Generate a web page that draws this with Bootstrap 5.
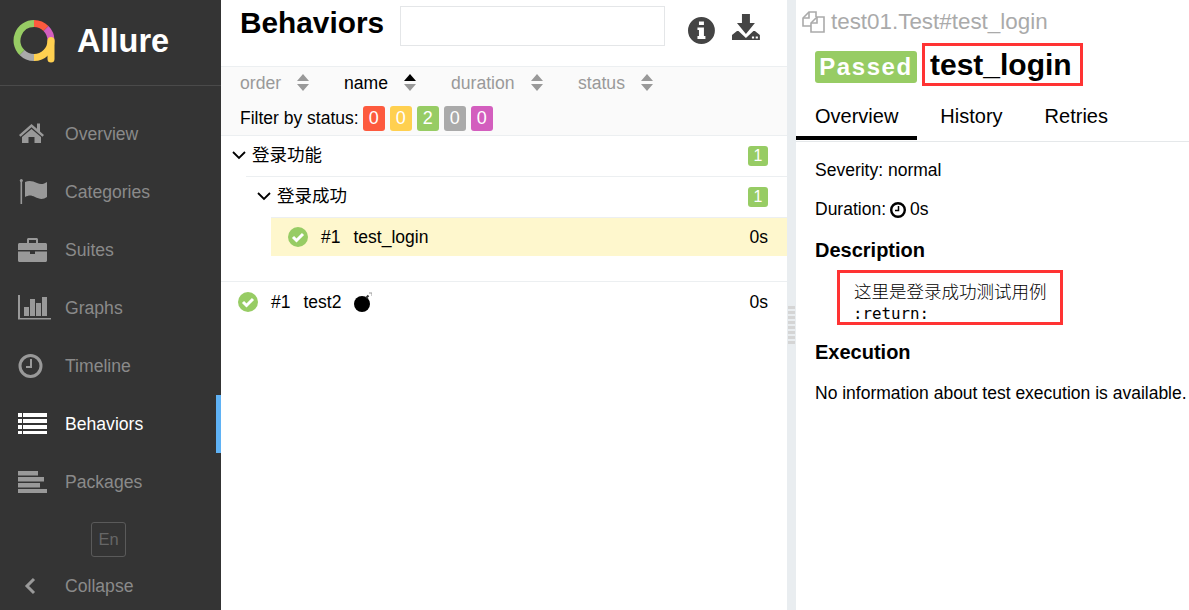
<!DOCTYPE html>
<html lang="en">
<head>
  <meta charset="UTF-8" />
  <title>Allure - Behaviors</title>
  <link href="https://cdn.jsdelivr.net/npm/bootstrap@5.3.3/dist/css/bootstrap.min.css" rel="stylesheet" />
  <style>
    html, body { height: 100%; overflow: hidden; }
    body { font-family: "Liberation Sans", "Noto Sans CJK SC", sans-serif; font-size: 17.5px; color: #000; }
    .app-shell { height: 610px; }

    .side-bar { width: 221px; flex: none; background: #343434; color: #8a8a8a; overflow: hidden; }
    .side-bar > * { flex: none; }
    .side-brand { height: 86px; border-bottom: 1px solid #4a4a4a; padding: 0 0 3px 13px; gap: 21px; color: #fff; font-size: 32.5px; font-weight: 700; }
    .side-menu { padding-top: 19px; }
    .side-item { height: 58px; padding-left: 17px; gap: 18px; font-size: 17.6px; color: #8a8a8a; }
    .side-item.is-active { color: #fff; border-right: 5px solid #5fb2f5; }
    .side-item svg { width: 30px; height: 30px; flex: none; overflow: visible; color: #999; }
    .side-item.is-active svg { color: #fff; }
    .lang-box { width: 35px; height: 35px; margin: 11px 0 0 91px; border: 1px solid #5a5a5a; border-radius: 3px; color: #666; font-size: 16.5px; }

    .tree-pane { width: 566px; flex: none; }
    .pane-head { height: 67px; padding: 6px 26px 0 19px; border-bottom: 1px solid #eceff1; }
    .pane-title { font-size: 29.8px; font-weight: 700; line-height: 34px; margin: 0 16px 0 0; width: 145px; white-space: nowrap; }
    .search-box { width: 266px; height: 40px; border: 1px solid #e4e6e8; border-radius: 0; }
    .tool-glyph { color: #444; }
    .info-glyph { margin: 11px 0 0 23px; }
    .save-glyph { margin: 8px 0 0 16px; }
    .sort-bar { height: 69px; background: #fafafa; border-bottom: 1px solid #eceff1; padding-left: 19px; }
    .sort-row { height: 32px; color: #999; font-size: 17.6px; }
    .sort-item { gap: 16px; }
    .sort-item.is-on { color: #000; }
    .sort-order { width: 104px; }
    .sort-name { width: 107px; }
    .sort-duration { width: 127px; }
    .filter-row { height: 32px; margin-top: 3px; gap: 5px; }
    .stat-chip { width: 22px; height: 25px; border-radius: 3px; color: #fff; font-size: 18px; }
    .chip-failed { background: #fd5a3e; margin-left: -1px; }
    .chip-broken { background: #ffd050; }
    .chip-passed { background: #97cc64; }
    .chip-skipped { background: #aaa; }
    .chip-unknown { background: #d35ebe; }

    .tree-row { padding-right: 19px; }
    .group-one { height: 40px; margin-left: 11px; }
    .group-two { height: 41px; margin-left: 25px; padding-left: 11px; border-top: 1px solid #eceff1; }
    .group-label { gap: 6px; padding-bottom: 2px; }
    .count-chip { width: 20px; height: 20px; border-radius: 3px; background: #97cc64; color: #fff; font-size: 16px; }
    .leaf-row { height: 39px; margin-left: 50px; padding-left: 17px; border-top: 1px solid #eceff1; background: #fef7cd; }
    .plain-row { height: 41px; margin-top: 25px; padding-left: 17px; border-top: 1px solid #eceff1; }
    .leaf-main { gap: 13px; }

    .split-bar { width: 9px; flex: none; background: #e9edf0; }
    .split-dots { width: 7px; height: 40px; margin-top: 306px; background-image: linear-gradient(#d5d5d5 60%, transparent 60%), linear-gradient(90deg, transparent 45%, #e9edf0 45%, #e9edf0 55%, transparent 55%); background-size: 100% 5px, 100% 100%; }

    .detail-pane { flex: 1; min-width: 0; white-space: nowrap; overflow: hidden; }
    .detail-path { height: 43px; padding-left: 6px; gap: 6px; color: #aaa; font-size: 22.4px; }
    .detail-title { height: 46px; padding-left: 19px; gap: 5px; }
    .pass-tag { width: 102px; height: 32px; margin-top: 8px; background: #97cc64; color: #fff; border-radius: 3px; font-size: 24px; font-weight: 700; letter-spacing: 1.6px; }
    .title-frame { border: 3px solid #f33; padding: 0 8px 0 5px; height: 43px; font-size: 30px; font-weight: 700; line-height: 38px; }
    .tab-strip { height: 53px; border-bottom: 1px solid #e5e8ea; }
    .tab-item { height: 51px; padding: 7px 19px 0; font-size: 20px; color: #000; }
    .tab-item.is-open { border-bottom: 4px solid #000; }
    .tab-item + .tab-item { padding: 7px 23px 4px; }
    .tab-item + .tab-item + .tab-item { padding-left: 19px; }
    .detail-body { padding: 18px 0 0 19px; line-height: 21px; }
    .detail-line { margin-bottom: 18px; }
    .detail-heading { font-size: 20px; font-weight: 700; line-height: 24px; margin: 0 0 8px; }
    .desc-frame { width: 226px; height: 55px; margin: 0 0 15px 22px; border: 3px solid #f33; padding: 7px 0 0 14px; line-height: 21px; }
    .desc-cjk { font-size: 17.5px; font-family: "Noto Sans CJK SC", sans-serif; font-weight: 300; }
    .desc-code { font-family: "DejaVu Sans Mono", monospace; font-size: 15.8px; display: block; margin-left: -1px; }
    .detail-note { margin-top: 19px; }
  </style>
</head>
<body>

  <div class="d-flex app-shell">

    <div class="side-bar d-flex flex-column">
      <div class="side-brand d-flex align-items-center">
        <svg width="43" height="44" viewBox="0 0 43 44" fill="none" stroke-width="7">
          <path d="M21 4.500a17 17 0 0 1 12 5" stroke="#fd5a3e" />
          <path d="M33 9.500a17 17 0 0 1 5 12" stroke="#d35ebe" />
          <path d="M38 21.500a17 17 0 0 1-17 17" stroke="#ffd050" />
          <path d="M38 21.500V40" stroke="#ffd050" stroke-linecap="round" />
          <path d="M21 38.500a17 17 0 0 1-12-5" stroke="#aaa" />
          <path d="M9 33.500A17 17 0 0 1 21 4.500" stroke="#97cc64" />
        </svg>
        <span>Allure</span>
      </div>
      <div class="side-menu">
        <div class="side-item d-flex align-items-center">
          <svg viewBox="0 0 30 30" fill="currentColor"><path d="M14.500 5 2 16l1.600 1.800L14.500 8.200l10.900 9.600L27 16l-4-3.600V4.500h-3v5.200z" /><path d="M14.500 10 5 18v6h6.500v-6h6v6H24v-6z" /></svg>
          <span>Overview</span>
        </div>
        <div class="side-item d-flex align-items-center">
          <svg viewBox="0 0 30 30" fill="currentColor"><rect x="3.500" y="3" width="1.600" height="24" /><circle cx="4.300" cy="3.500" r="1.500" /><path d="M8 5c4-2 8-1 12 1s7 1 10-1v15c-4 3-8 2-12 0s-6-2-10 0z" /></svg>
          <span>Categories</span>
        </div>
        <div class="side-item d-flex align-items-center">
          <svg viewBox="0 0 30 30" fill="currentColor"><path fill-rule="evenodd" d="M10 8V4.500C10 3.700 10.700 3 11.500 3h8c.8 0 1.500.7 1.500 1.500V8h7.500c.8 0 1.500.7 1.500 1.500V15H1V9.500C1 8.700 1.700 8 2.500 8zm2 0h7V5h-7z" /><path d="M1 16.500h12V19h5v-2.500h12v9c0 .8-.7 1.500-1.500 1.500h-26C1.700 27 1 26.300 1 25.500z" /></svg>
          <span>Suites</span>
        </div>
        <div class="side-item d-flex align-items-center">
          <svg viewBox="0 0 30 30" fill="currentColor"><path d="M1 2h2v23h31v1.500H1z" /><rect x="7" y="14" width="5" height="9" /><rect x="13" y="6" width="5" height="17" /><rect x="19" y="10" width="5" height="13" /><rect x="25" y="4" width="5" height="19" /></svg>
          <span>Graphs</span>
        </div>
        <div class="side-item d-flex align-items-center">
          <svg viewBox="0 0 30 30" fill="none" stroke="currentColor"><circle cx="13.500" cy="15" r="10.500" stroke-width="3" /><path d="M14 8v8H9" stroke-width="2" /></svg>
          <span>Timeline</span>
        </div>
        <div class="side-item is-active d-flex align-items-center">
          <svg viewBox="0 0 30 30" fill="currentColor"><path d="M1 4h4v4H1zm5 0h24v4H6zM1 10h4v4H1zm5 0h24v4H6zM1 16h4v4H1zm5 0h24v4H6zM1 22h4v3H1zm5 0h24v3H6z" /></svg>
          <span>Behaviors</span>
        </div>
        <div class="side-item d-flex align-items-center">
          <svg viewBox="0 0 30 30" fill="currentColor"><rect x="1" y="4" width="20" height="4.500" /><rect x="1" y="10" width="26" height="4.500" /><rect x="1" y="16" width="22" height="4.500" /><rect x="1" y="22" width="29" height="4" /></svg>
          <span>Packages</span>
        </div>
      </div>
      <div class="lang-box d-flex align-items-center justify-content-center">En</div>
      <div class="side-item d-flex align-items-center">
        <svg viewBox="0 0 30 30" fill="none" stroke="currentColor" stroke-width="3"><path d="M17 8l-7 7 7 7" /></svg>
        <span>Collapse</span>
      </div>
    </div>

    <div class="tree-pane">
      <div class="pane-head d-flex">
        <h2 class="pane-title">Behaviors</h2>
        <input class="search-box" type="text" />
        <svg class="tool-glyph info-glyph" width="27" height="27" viewBox="0 0 27 27"><path fill="currentColor" fill-rule="evenodd" d="M13.500 0a13.500 13.500 0 1 1 0 27 13.500 13.500 0 0 1 0-27zM11 4.500v3.500h5V4.500zM9.500 10.500v2.500H11v6H9.500v3h8v-3H16v-8.500z" /></svg>
        <svg class="tool-glyph save-glyph" width="30" height="28" viewBox="0 0 30 28"><path fill="currentColor" fill-rule="evenodd" d="M11 0h8v9h5L15 20 6 9h5zM1 26v-5l5-4h1.500l7.500 7 7.500-7H24l5 4v5zm20-3.500v2h2.200v-2zm3.800 0v2H27v-2z" /></svg>
      </div>
      <div class="sort-bar">
        <div class="sort-row d-flex align-items-center">
          <div class="sort-item sort-order d-flex align-items-center"><span>order</span><svg width="12" height="17" viewBox="0 0 12 17" fill="#999"><path d="M6 0l6 7H0zM6 17l6-7H0z" /></svg></div>
          <div class="sort-item sort-name is-on d-flex align-items-center"><span>name</span><svg width="12" height="17" viewBox="0 0 12 17"><path d="M6 0l6 7H0z" fill="#000" /><path d="M6 17l6-7H0z" fill="#999" /></svg></div>
          <div class="sort-item sort-duration d-flex align-items-center"><span>duration</span><svg width="12" height="17" viewBox="0 0 12 17" fill="#999"><path d="M6 0l6 7H0zM6 17l6-7H0z" /></svg></div>
          <div class="sort-item d-flex align-items-center"><span>status</span><svg width="12" height="17" viewBox="0 0 12 17" fill="#999"><path d="M6 0l6 7H0zM6 17l6-7H0z" /></svg></div>
        </div>
        <div class="filter-row d-flex align-items-center">
          <span>Filter by status:</span>
          <span class="stat-chip chip-failed d-flex align-items-center justify-content-center">0</span>
          <span class="stat-chip chip-broken d-flex align-items-center justify-content-center">0</span>
          <span class="stat-chip chip-passed d-flex align-items-center justify-content-center">2</span>
          <span class="stat-chip chip-skipped d-flex align-items-center justify-content-center">0</span>
          <span class="stat-chip chip-unknown d-flex align-items-center justify-content-center">0</span>
        </div>
      </div>

      <div class="tree-row group-one d-flex align-items-center justify-content-between">
        <span class="group-label d-flex align-items-center">
          <svg width="14" height="14" viewBox="0 0 14 14" fill="none" stroke="#000" stroke-width="1.800"><path d="M1 4l6 6 6-6" /></svg>
          <span>登录功能</span>
        </span>
        <span class="count-chip d-flex align-items-center justify-content-center">1</span>
      </div>
      <div class="tree-row group-two d-flex align-items-center justify-content-between">
        <span class="group-label d-flex align-items-center">
          <svg width="14" height="14" viewBox="0 0 14 14" fill="none" stroke="#000" stroke-width="1.800"><path d="M1 4l6 6 6-6" /></svg>
          <span>登录成功</span>
        </span>
        <span class="count-chip d-flex align-items-center justify-content-center">1</span>
      </div>
      <div class="tree-row leaf-row d-flex align-items-center justify-content-between">
        <span class="leaf-main d-flex align-items-center">
          <svg width="20" height="20" viewBox="0 0 20 20"><circle cx="10" cy="10" r="10" fill="#97cc64" /><path d="M5 10l3.500 3.500L15 7" fill="none" stroke="#fff" stroke-width="3" /></svg>
          <span>#1</span>
          <span>test_login</span>
        </span>
        <span>0s</span>
      </div>
      <div class="tree-row plain-row d-flex align-items-center justify-content-between">
        <span class="leaf-main d-flex align-items-center">
          <svg width="20" height="20" viewBox="0 0 20 20"><circle cx="10" cy="10" r="10" fill="#97cc64" /><path d="M5 10l3.500 3.500L15 7" fill="none" stroke="#fff" stroke-width="3" /></svg>
          <span>#1</span>
          <span>test2</span>
          <svg width="18" height="20" viewBox="0 0 18 20"><circle cx="8" cy="12" r="8" fill="#000" /><path d="M12 6l2.500-2.500" stroke="#333" stroke-width="2" /><path d="M15 1h3v3" fill="none" stroke="#999" /></svg>
        </span>
        <span>0s</span>
      </div>
    </div>

    <div class="split-bar"><div class="split-dots ms-auto me-auto"></div></div>

    <div class="detail-pane">
      <div class="detail-path d-flex align-items-center">
        <svg width="23" height="22" viewBox="0 0 23 22" fill="none" stroke="#aaa" stroke-width="1.600"><path d="M14 6V1H7L1 7v8h8" /><path d="M7 1v6H1" /><path d="M15 6h7v15H9V12z" /><path d="M15 6v6H9" /></svg>
        <span>test01.Test#test_login</span>
      </div>
      <div class="detail-title d-flex">
        <span class="pass-tag d-flex align-items-center justify-content-center">Passed</span>
        <span class="title-frame">test_login</span>
      </div>
      <div class="tab-strip d-flex">
        <div class="tab-item is-open d-flex align-items-center">Overview</div>
        <div class="tab-item d-flex align-items-center">History</div>
        <div class="tab-item d-flex align-items-center">Retries</div>
      </div>
      <div class="detail-body">
        <div class="detail-line">Severity: normal</div>
        <div class="detail-line d-flex align-items-center gap-1">Duration:
          <svg width="16" height="16" viewBox="0 0 16 16" fill="none" stroke="#000"><circle cx="8" cy="8" r="6.800" stroke-width="2.400" /><path d="M8.500 4v4.500H5" stroke-width="1.500" /></svg>
          0s</div>
        <h3 class="detail-heading">Description</h3>
        <div class="desc-frame">
          <span class="desc-cjk">这里是登录成功测试用例</span>
          <span class="desc-code">:return:</span>
        </div>
        <h3 class="detail-heading">Execution</h3>
        <div class="detail-line detail-note">No information about test execution is available.</div>
      </div>
    </div>

  </div>

  <script src="https://cdn.jsdelivr.net/npm/bootstrap@5.3.3/dist/js/bootstrap.bundle.min.js"></script>
</body>
</html>
